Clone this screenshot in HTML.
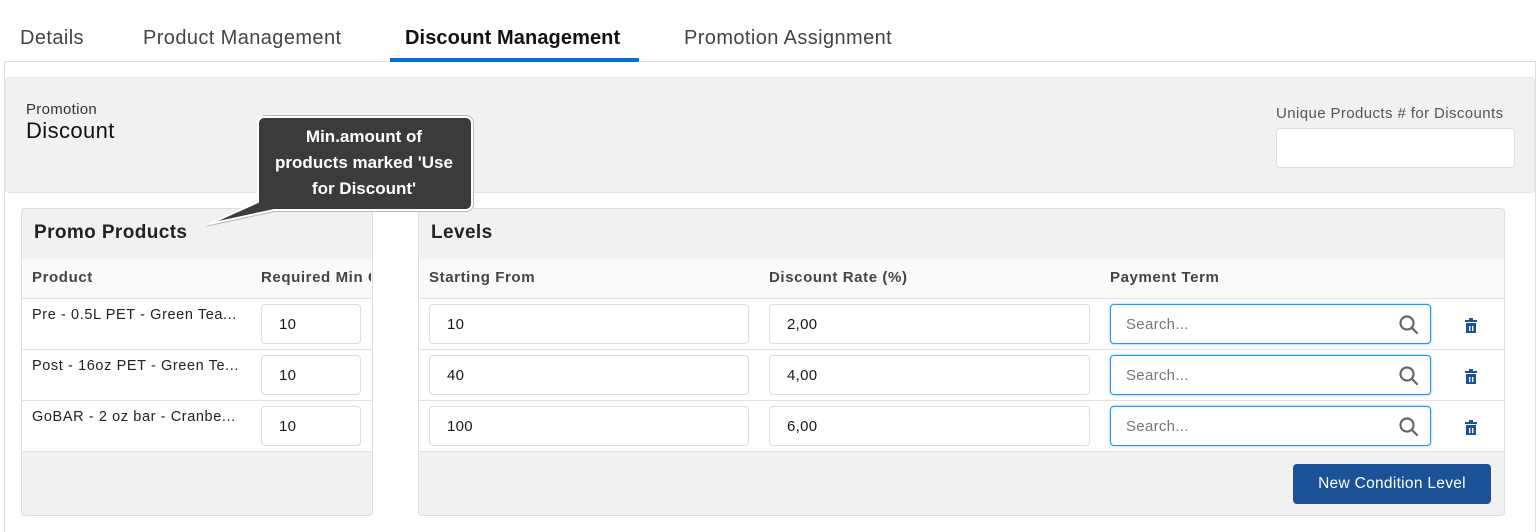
<!DOCTYPE html>
<html><head><meta charset="utf-8"><style>
*{box-sizing:border-box;margin:0;padding:0}
body{width:1536px;height:530px;background:#fff;font-family:"Liberation Sans",sans-serif;color:#181818;position:relative;overflow:hidden}
.abs{position:absolute}
.tab{position:absolute;top:27px;font-size:20px;color:#444;letter-spacing:0.4px}
.inp{position:absolute;height:40px;border:1px solid #dcdcdc;border-radius:4px;background:#fff;font-size:15px;padding:11px 0 0 17px;color:#181818;letter-spacing:0.3px}
.srch{position:absolute;height:40px;border:1px solid #1b96ff;border-radius:4px;background:#fff;font-size:15px;padding:11px 0 0 15px;color:#777;box-shadow:0 0 2px #6bb4ff;letter-spacing:0.3px}
.hl{position:absolute;height:1px;background:#e2e2e2}
.th{position:absolute;top:269px;font-size:15px;font-weight:bold;color:#444;letter-spacing:0.6px}
.pn{position:absolute;font-size:14.5px;color:#222;letter-spacing:0.6px}
</style></head><body>
<div class="tab" style="left:20px">Details</div>
<div class="tab" style="left:143px">Product Management</div>
<div class="tab" style="left:405px;color:#111;font-weight:bold;letter-spacing:0.1px">Discount Management</div>
<div class="tab" style="left:684px">Promotion Assignment</div>
<div class="abs" style="left:4px;top:61px;width:1532px;height:1px;background:#ddd"></div>
<div class="abs" style="left:390px;top:58px;width:249px;height:4px;background:#0070d2"></div>
<div class="abs" style="left:4px;top:62px;width:1532px;height:470px;border-left:1px solid #ddd;border-right:1px solid #ddd"></div>
<div class="abs" style="left:5px;top:77px;width:1530px;height:116px;background:#f1f1f1;border:1px solid #e6e6e6;border-radius:4px"></div>
<div class="abs" style="left:26px;top:101px;font-size:15px;color:#333;letter-spacing:0.3px">Promotion</div>
<div class="abs" style="left:26px;top:118px;font-size:22px;color:#111;letter-spacing:0.4px">Discount</div>
<div class="abs" style="left:1276px;top:105px;font-size:15px;color:#555;letter-spacing:0.4px">Unique Products # for Discounts</div>
<div class="abs" style="left:1276px;top:128px;width:239px;height:40px;background:#fff;border:1px solid #ddd;border-radius:4px"></div>
<div class="abs" style="left:21px;top:208px;width:352px;height:308px;background:#f1f1f1;border:1px solid #ddd;border-radius:4px;overflow:hidden">
 <div class="abs" style="left:0;top:50px;width:352px;height:40px;background:#fafaf9"></div>
 <div class="abs" style="left:0;top:90px;width:352px;height:153px;background:#fff"></div>
</div>
<div class="abs" style="left:34px;top:222px;font-size:19px;font-weight:bold;color:#222;letter-spacing:0.4px">Promo Products</div>
<div class="th" style="left:32px">Product</div>
<div class="th" style="left:261px;width:110px;overflow:hidden;white-space:nowrap">Required Min Qty</div>
<div class="hl" style="left:22px;top:298px;width:350px"></div>
<div class="hl" style="left:22px;top:349px;width:350px"></div>
<div class="hl" style="left:22px;top:400px;width:350px"></div>
<div class="hl" style="left:22px;top:451px;width:350px"></div>
<div class="pn" style="left:32px;top:307px">Pre - 0.5L PET - Green Tea...</div>
<div class="pn" style="left:32px;top:358px">Post - 16oz PET - Green Te...</div>
<div class="pn" style="left:32px;top:409px">GoBAR - 2 oz bar - Cranbe...</div>
<div class="inp" style="left:261px;top:304px;width:100px">10</div>
<div class="inp" style="left:261px;top:355px;width:100px">10</div>
<div class="inp" style="left:261px;top:406px;width:100px">10</div>
<div class="abs" style="left:418px;top:208px;width:1087px;height:308px;background:#f1f1f1;border:1px solid #ddd;border-radius:4px;overflow:hidden">
 <div class="abs" style="left:0;top:50px;width:1087px;height:40px;background:#fafaf9"></div>
 <div class="abs" style="left:0;top:90px;width:1087px;height:153px;background:#fff"></div>
</div>
<div class="abs" style="left:431px;top:222px;font-size:19px;font-weight:bold;color:#222;letter-spacing:0.4px">Levels</div>
<div class="th" style="left:429px">Starting From</div>
<div class="th" style="left:769px">Discount Rate (%)</div>
<div class="th" style="left:1110px">Payment Term</div>
<div class="hl" style="left:419px;top:298px;width:1085px"></div>
<div class="hl" style="left:419px;top:349px;width:1085px"></div>
<div class="hl" style="left:419px;top:400px;width:1085px"></div>
<div class="hl" style="left:419px;top:451px;width:1085px"></div>
<div class="inp" style="left:429px;top:304px;width:320px">10</div>
<div class="inp" style="left:429px;top:355px;width:320px">40</div>
<div class="inp" style="left:429px;top:406px;width:320px">100</div>
<div class="inp" style="left:769px;top:304px;width:321px">2,00</div>
<div class="inp" style="left:769px;top:355px;width:321px">4,00</div>
<div class="inp" style="left:769px;top:406px;width:321px">6,00</div>
<div class="srch" style="left:1110px;top:304px;width:321px">Search...</div>
<div class="srch" style="left:1110px;top:355px;width:321px">Search...</div>
<div class="srch" style="left:1110px;top:406px;width:321px">Search...</div>
<svg class="abs" style="left:0;top:0" width="1536" height="530">
 <g fill="none" stroke="#666" stroke-width="2.2" stroke-linecap="round">
  <circle cx="1407" cy="323" r="6.5"/><path d="M1412 328l5 5"/>
  <circle cx="1407" cy="374" r="6.5"/><path d="M1412 379l5 5"/>
  <circle cx="1407" cy="425" r="6.5"/><path d="M1412 430l5 5"/>
 </g>
 <g fill="#1b5297">
  <path d="M1465 320h12v2h-12z M1469 318h4v2h-4z M1466 323h10v10h-10z"/>
  <path d="M1465 371h12v2h-12z M1469 369h4v2h-4z M1466 374h10v10h-10z"/>
  <path d="M1465 422h12v2h-12z M1469 420h4v2h-4z M1466 425h10v10h-10z"/>
 </g>
 <g fill="#fff">
  <rect x="1469" y="326" width="1.4" height="5"/><rect x="1472" y="326" width="1.4" height="5"/>
  <rect x="1469" y="377" width="1.4" height="5"/><rect x="1472" y="377" width="1.4" height="5"/>
  <rect x="1469" y="428" width="1.4" height="5"/><rect x="1472" y="428" width="1.4" height="5"/>
 </g>
 <path d="M262 115h204a8 8 0 0 1 8 8v81a8 8 0 0 1 -8 8h-191l-70 15l53 -24v-80a8 8 0 0 1 8 -8z" fill="#bbb"/>
 <path d="M262 117h204a6 6 0 0 1 6 6v81a6 6 0 0 1 -6 6h-192l-65 14l49 -22v-79a6 6 0 0 1 6 -6z" fill="#3b3b3b" stroke="#fff" stroke-width="2"/>
</svg>
<div class="abs" style="left:256px;top:124px;width:216px;text-align:center;color:#fff;font-weight:bold;font-size:17px;line-height:26px">Min.amount of<br>products marked 'Use<br>for Discount'</div>
<div class="abs" style="left:1293px;top:464px;width:198px;height:40px;background:#1b5297;border-radius:4px;color:#fff;font-size:15.5px;text-align:center;line-height:40px;letter-spacing:0.3px">New Condition Level</div>
</body></html>
